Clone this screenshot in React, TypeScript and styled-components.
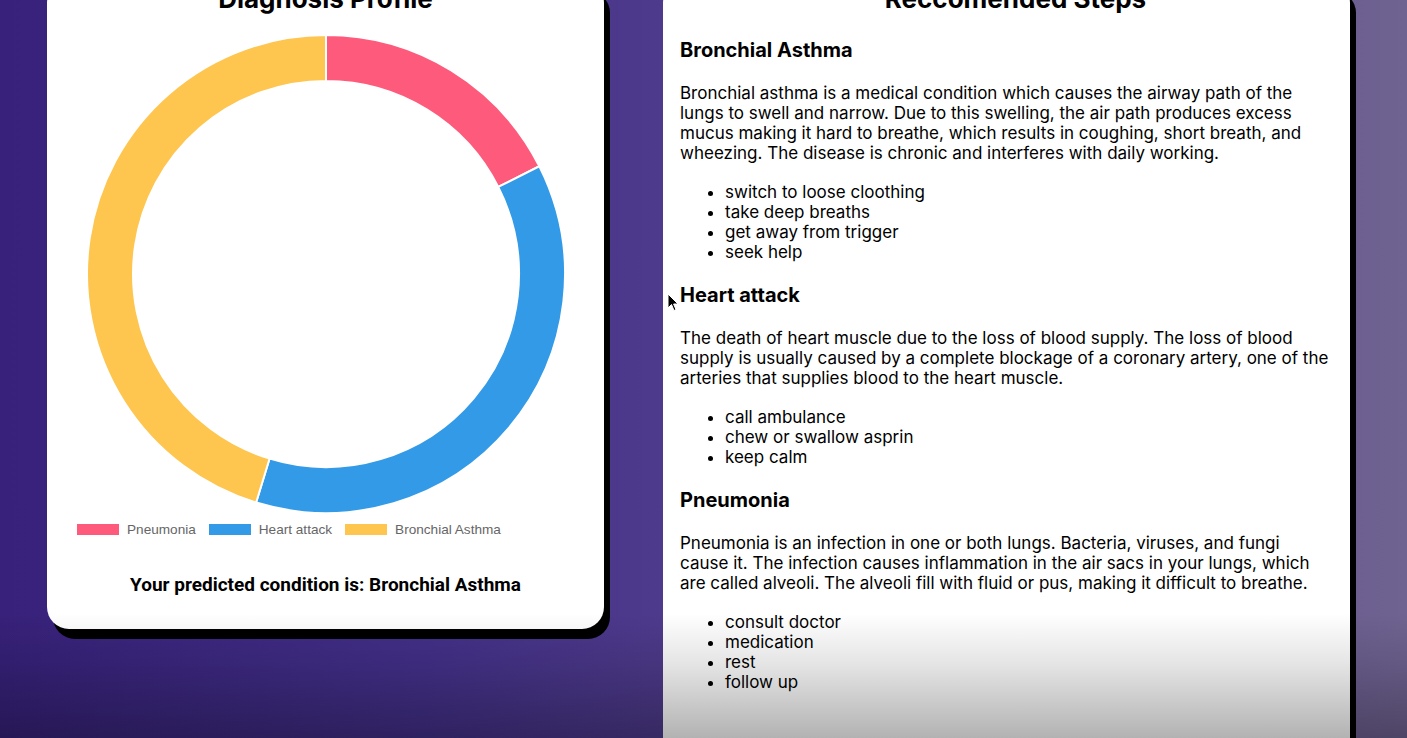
import React from "react";
import styled, { createGlobalStyle } from "styled-components";

const GlobalStyle = createGlobalStyle`
  html, body {
    margin: 0;
    padding: 0;
  }
  body {
    font-family: Inter, "Noto Sans", sans-serif;
    background: #3a2479;
  }
`;

const Page = styled.div`
  position: relative;
  display: flex;
  flex-direction: row;
  align-items: flex-start;
  gap: 59px;
  box-sizing: border-box;
  width: 1407px;
  height: 738px;
  padding-left: 47px;
  overflow: hidden;
  background: linear-gradient(90deg, #37217a 0%, #43308a 30%, #4f3b8c 48%, #5e4c8e 70%, #6f6391 100%);
`;

const Card = styled.div<{ $width: number }>`
  box-sizing: border-box;
  width: ${props => props.$width}px;
  margin-top: -19px;
  background: #fff;
  border-radius: 22px;
  box-shadow: 6px 10px 0 #000;
  color: #000;
`;

const ProfileCard = styled(Card)`
  display: flex;
  flex-direction: column;
  align-items: center;
  padding-bottom: 33px;
`;

const StepsCard = styled(Card)`
  padding: 0 21px 80px 17px;
  min-height: 800px;
`;

const Title = styled.h2<{ $shift?: number }>`
  margin: 0;
  font-size: 26px;
  line-height: 36px;
  font-weight: 700;
  text-align: center;
  padding-left: ${props => props.$shift || 0}px;
`;

const ChartTitle = styled(Title)`
  margin-bottom: 17px;
`;

const StepsTitle = styled(Title)`
  margin-bottom: 21px;
`;

const Legend = styled.div`
  display: flex;
  flex-direction: row;
  align-items: center;
  gap: 13px;
  align-self: flex-start;
  margin: 7px 0 0 30px;
  height: 16px;
`;

const LegendItem = styled.div`
  display: flex;
  align-items: center;
  gap: 8px;
  font-family: "Liberation Sans", Arial, sans-serif;
  font-size: 13.6px;
  color: #666;
`;

const Swatch = styled.span<{ $color: string }>`
  display: inline-block;
  width: 42px;
  height: 11px;
  background: ${props => props.$color};
`;

const Prediction = styled.p`
  margin: 37px 0 0;
  font-family: Roboto, "Noto Sans", sans-serif;
  font-size: 19px;
  line-height: 22px;
  font-weight: 700;
  text-align: center;
`;

const Disease = styled.h3`
  margin: 0;
  font-size: 20px;
  line-height: 24px;
  font-weight: 700;
`;

const Para = styled.p`
  margin: 21px 0 19px;
  font-size: 17px;
  line-height: 20px;
`;

const Steps = styled.ul`
  margin: 0 0 21px;
  padding-left: 45px;
  font-size: 17px;
  line-height: 20px;
`;

const Cursor = styled.svg`
  position: absolute;
  left: 667px;
  top: 293px;
  width: 12px;
  height: 19px;
`;

const Fade = styled.div`
  position: absolute;
  left: 0;
  right: 0;
  bottom: 0;
  height: 125px;
  pointer-events: none;
  background: linear-gradient(180deg, rgba(0, 0, 0, 0) 0%, rgba(0, 0, 0, 0.1) 40%, rgba(0, 0, 0, 0.3) 100%);
`;

const segments = [
  { label: "Pneumonia", color: "#fe5a7b", value: 63.2 },
  { label: "Heart attack", color: "#339ae7", value: 133.8 },
  { label: "Bronchial Asthma", color: "#fec54f", value: 163 },
];

const polar = (r: number, deg: number) => {
  const a = ((deg - 90) * Math.PI) / 180;
  return [240 + r * Math.cos(a), 240 + r * Math.sin(a)];
};

const arcPath = (start: number, end: number, ro: number, ri: number) => {
  const large = end - start > 180 ? 1 : 0;
  const [x1, y1] = polar(ro, start);
  const [x2, y2] = polar(ro, end);
  const [x3, y3] = polar(ri, end);
  const [x4, y4] = polar(ri, start);
  return `M${x1} ${y1} A${ro} ${ro} 0 ${large} 1 ${x2} ${y2} L${x3} ${y3} A${ri} ${ri} 0 ${large} 0 ${x4} ${y4} Z`;
};

const Donut: React.FC = () => {
  let angle = 0;
  return (
    <svg width="480" height="480" viewBox="0 0 480 480">
      {segments.map(s => {
        const d = arcPath(angle, angle + s.value, 239, 193);
        angle += s.value;
        return <path key={s.label} d={d} fill={s.color} stroke="#fff" strokeWidth="2" strokeLinejoin="round" />;
      })}
    </svg>
  );
};

const conditions = [
  {
    name: "Bronchial Asthma",
    text:
      "Bronchial asthma is a medical condition which causes the airway path of the lungs to swell and narrow. Due to this swelling, the air path produces excess mucus making it hard to breathe, which results in coughing, short breath, and wheezing. The disease is chronic and interferes with daily working.",
    steps: ["switch to loose cloothing", "take deep breaths", "get away from trigger", "seek help"],
  },
  {
    name: "Heart attack",
    text:
      "The death of heart muscle due to the loss of blood supply. The loss of blood supply is usually caused by a complete blockage of a coronary artery, one of the arteries that supplies blood to the heart muscle.",
    steps: ["call ambulance", "chew or swallow asprin", "keep calm"],
  },
  {
    name: "Pneumonia",
    text:
      "Pneumonia is an infection in one or both lungs. Bacteria, viruses, and fungi cause it. The infection causes inflammation in the air sacs in your lungs, which are called alveoli. The alveoli fill with fluid or pus, making it difficult to breathe.",
    steps: ["consult doctor", "medication", "rest", "follow up"],
  },
];

export default function App() {
  return (
    <>
      <GlobalStyle />
      <Page>
        <ProfileCard $width={557}>
          <ChartTitle>Diagnosis Profile</ChartTitle>
          <Donut />
          <Legend>
            {segments.map(s => (
              <LegendItem key={s.label}>
                <Swatch $color={s.color} />
                {s.label}
              </LegendItem>
            ))}
          </Legend>
          <Prediction>Your predicted condition is: Bronchial Asthma</Prediction>
        </ProfileCard>
        <StepsCard $width={687}>
          <StepsTitle $shift={22}>Reccomended Steps</StepsTitle>
          {conditions.map(c => (
            <section key={c.name}>
              <Disease>{c.name}</Disease>
              <Para>{c.text}</Para>
              <Steps>
                {c.steps.map(s => (
                  <li key={s}>{s}</li>
                ))}
              </Steps>
            </section>
          ))}
        </StepsCard>
        <Cursor viewBox="0 0 12 19">
          <path d="M1 1 L1 15 L4.5 11.5 L7 17.5 L9 16.6 L6.6 11 L11 11 Z" fill="#000" stroke="#fff" strokeWidth="1" />
        </Cursor>
        <Fade />
      </Page>
    </>
  );
}
